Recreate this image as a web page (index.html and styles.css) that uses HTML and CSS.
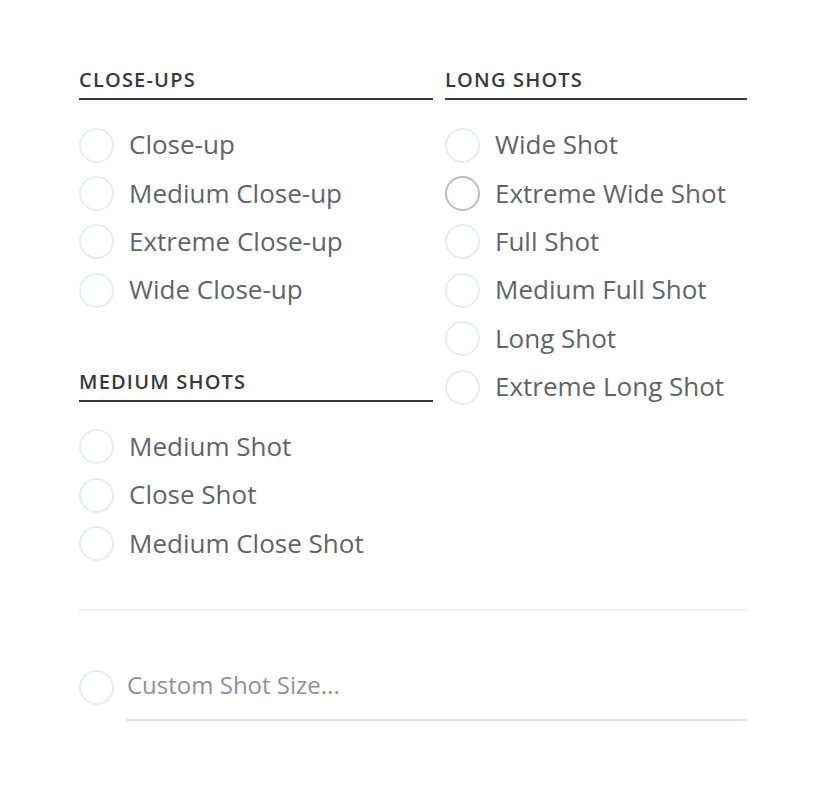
FILE: index.html
```html
<!DOCTYPE html>
<html>
<head>
<meta charset="utf-8">
<link rel="stylesheet" href="styles.css">
</head>
<body>
<div class="panel">
  <div class="columns">
    <div class="col col-left">
      <section class="group">
        <h3 class="group-title">Close-ups</h3>
        <ul class="options">
          <li class="option"><span class="radio"></span><span class="label">Close-up</span></li>
          <li class="option"><span class="radio"></span><span class="label">Medium Close-up</span></li>
          <li class="option"><span class="radio"></span><span class="label">Extreme Close-up</span></li>
          <li class="option"><span class="radio"></span><span class="label">Wide Close-up</span></li>
        </ul>
      </section>
      <section class="group group-spaced">
        <h3 class="group-title">Medium Shots</h3>
        <ul class="options">
          <li class="option"><span class="radio"></span><span class="label">Medium Shot</span></li>
          <li class="option"><span class="radio"></span><span class="label">Close Shot</span></li>
          <li class="option"><span class="radio"></span><span class="label">Medium Close Shot</span></li>
        </ul>
      </section>
    </div>
    <div class="col col-right">
      <section class="group">
        <h3 class="group-title">Long Shots</h3>
        <ul class="options">
          <li class="option"><span class="radio"></span><span class="label">Wide Shot</span></li>
          <li class="option"><span class="radio radio-hover"></span><span class="label">Extreme Wide Shot</span></li>
          <li class="option"><span class="radio"></span><span class="label">Full Shot</span></li>
          <li class="option"><span class="radio"></span><span class="label">Medium Full Shot</span></li>
          <li class="option"><span class="radio"></span><span class="label">Long Shot</span></li>
          <li class="option"><span class="radio"></span><span class="label">Extreme Long Shot</span></li>
        </ul>
      </section>
    </div>
  </div>
  <hr class="divider">
  <div class="custom">
    <span class="radio"></span>
    <input class="custom-input" type="text" placeholder="Custom Shot Size...">
  </div>
</div>
</body>
</html>
```

FILE: styles.css
```css
html, body {
  margin: 0;
  padding: 0;
  background: #ffffff;
}

body {
  font-family: "Open Sans", "Noto Sans", sans-serif;
}

.panel {
  width: 668px;
  margin-left: 79px;
  padding-top: 67px;
}

.columns {
  display: grid;
  grid-template-columns: 354px 302px;
  column-gap: 12px;
}

.group-title {
  margin: 0;
  font-size: 20px;
  font-weight: 600;
  text-transform: uppercase;
  line-height: 26px;
  color: #343a40;
  padding-bottom: 5px;
  border-bottom: 2px solid #343a40;
  letter-spacing: 1.2px;
}

.group-spaced {
  margin-top: 54px;
}

.options {
  list-style: none;
  margin: 21px 0 0 0;
  padding: 0;
}

.option {
  display: flex;
  align-items: center;
  height: 48.4px;
}

.radio {
  flex: none;
  box-sizing: border-box;
  width: 35px;
  height: 35px;
  border-radius: 50%;
  border: 2px solid #e9ecef;
  background: #ffffff;
}

.radio-hover {
  border-color: #b6bec5;
}

.label {
  margin-left: 15px;
  padding-bottom: 2px;
  font-size: 26px;
  color: #5c656e;
  line-height: 36px;
  white-space: nowrap;
}

.divider {
  margin: 41px 0 0 0;
  border: 0;
  height: 2px;
  background: #eef0f2;
}

.custom {
  display: flex;
  align-items: flex-start;
  margin-top: 58px;
}

.custom .radio {
  margin-top: 1px;
}

.custom-input {
  flex: 1;
  margin-left: 13px;
  padding: 0 0 18px 0;
  border: 0;
  border-bottom: 2px solid #dce3e8;
  outline: none;
  font-family: "Open Sans", "Noto Sans", sans-serif;
  font-size: 24px;
  line-height: 32px;
  height: 52px;
  box-sizing: border-box;
  color: #5c656e;
  background: transparent;
}

.custom-input::placeholder {
  color: #8a939b;
}
```
